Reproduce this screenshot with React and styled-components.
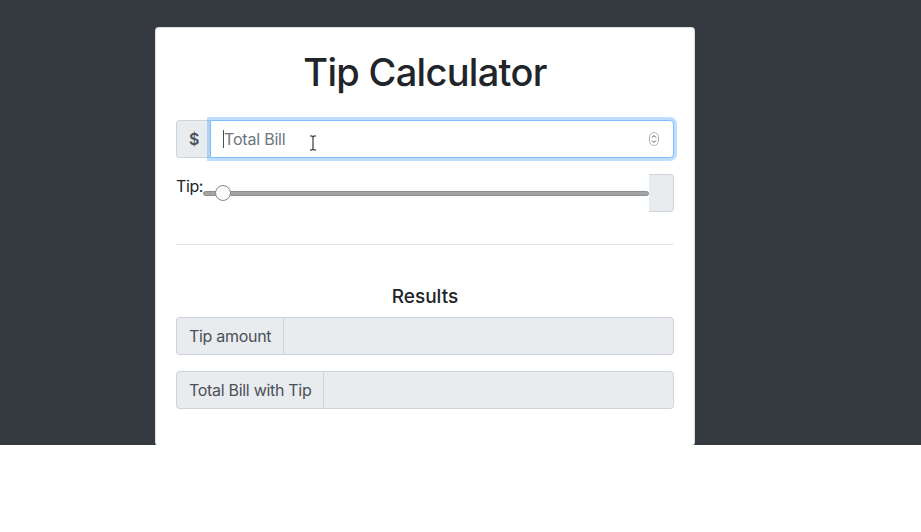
import styled, { createGlobalStyle } from "styled-components";

const GlobalStyle = createGlobalStyle`
    body {
        margin: 0;
        background: #fff;
        font-family: Inter, "Liberation Sans", sans-serif;
        color: #212529;
    }
`;

const Stage = styled.section`
    height: 445px;
    background-color: #343a40;
    padding: 27px 0 0 155px;
    box-sizing: border-box;
`;

const Card = styled.div`
    width: 540px;
    box-sizing: border-box;
    background: #fff;
    border: 1px solid rgba(0, 0, 0, 0.125);
    border-radius: 4px;
    padding: 20px;
`;

const Title = styled.h1`
    margin: 0 0 24px;
    font-size: 38px;
    line-height: 48px;
    font-weight: 500;
    text-align: center;
    letter-spacing: -0.7px;
`;

const Subtitle = styled.h5`
    margin: 0 0 8px;
    font-size: 19px;
    line-height: 24px;
    font-weight: 500;
    text-align: center;
`;

const Group = styled.div`
    display: flex;
    height: 38px;
    margin-bottom: ${(p) => p.$mb || 0}px;
    position: relative;
`;

const Addon = styled.span`
    display: flex;
    align-items: center;
    padding: 0 12px;
    background: #e9ecef;
    border: 1px solid #ced4da;
    border-radius: ${(p) => (p.$right ? "0 4px 4px 0" : "4px 0 0 4px")};
    ${(p) => (p.$right ? "border-left: 0;" : "border-right: 0;")}
    color: #495057;
    font-size: 16px;
    letter-spacing: -0.3px;
    font-weight: ${(p) => (p.$bold ? 600 : 400)};
    width: ${(p) => (p.$w ? `${p.$w}px` : "auto")};
    box-sizing: border-box;
`;

const Field = styled.div`
    flex: 1;
    display: flex;
    align-items: center;
    padding: 0 12px;
    border: 1px solid ${(p) => (p.$focus ? "#80bdff" : "#ced4da")};
    border-radius: 0 4px 4px 0;
    background: ${(p) => (p.$disabled ? "#e9ecef" : "#fff")};
    box-shadow: ${(p) => (p.$focus ? "0 0 0 3px rgba(0, 123, 255, 0.25)" : "none")};
    font-size: 16px;
    position: relative;
    z-index: ${(p) => (p.$focus ? 2 : 0)};
`;

const Placeholder = styled.span`
    color: #6c757d;
    flex: 1;
    display: flex;
    align-items: center;
    letter-spacing: -0.2px;

    &::before {
        content: "";
        width: 1px;
        height: 18px;
        background: #495057;
    }
`;

const Spinner = styled.svg`
    width: 10px;
    height: 14px;
    margin-right: 2px;
`;

const Cursor = styled.svg`
    position: absolute;
    left: 98px;
    top: 14px;
    width: 8px;
    height: 16px;
`;

const TipRow = styled.div`
    display: flex;
    height: 38px;
    margin-top: 16px;
`;

const TipLabel = styled.label`
    font-size: 16px;
    line-height: 24px;
    letter-spacing: -0.4px;
`;

const Range = styled.input`
    flex: 1;
    margin: 12px 0 0;
    height: 14px;
    appearance: none;
    -webkit-appearance: none;
    background: transparent;

    &::-webkit-slider-runnable-track {
        height: 5px;
        background: #a4a4a4;
        border: 1px solid #8e8e8e;
        border-radius: 3px;
        box-sizing: border-box;
    }

    &::-webkit-slider-thumb {
        -webkit-appearance: none;
        width: 16px;
        height: 16px;
        margin-top: -6.5px;
        border-radius: 50%;
        background: #fbfbfb;
        border: 1px solid #8a8a8a;
        box-sizing: border-box;
    }
`;

const Divider = styled.hr`
    margin: 32px 0 40px;
    border: 0;
    border-top: 1px solid rgba(0, 0, 0, 0.1);
`;

function App() {
    return (
        <>
            <GlobalStyle />
            <Stage>
                <Card>
                    <Title>Tip Calculator</Title>
                    <Group>
                        <Addon $bold $w={34}>$</Addon>
                        <Field $focus>
                            <Placeholder>Total Bill</Placeholder>
                            <Spinner viewBox="0 0 10 14">
                                <rect x="0.5" y="0.5" width="9" height="13" rx="4.5" fill="#fff" stroke="#b5b5b5" />
                                <path d="M3 5.5 L5 3.5 L7 5.5 M3 8.5 L5 10.5 L7 8.5" fill="none" stroke="#555" strokeWidth="1" />
                            </Spinner>
                            <Cursor viewBox="0 0 8 16">
                                <path d="M1 1 H3 Q4 1 4 2 Q4 1 5 1 H7 M4 2 V14 M1 15 H3 Q4 15 4 14 Q4 15 5 15 H7" fill="none" stroke="#111" strokeWidth="1" />
                            </Cursor>
                        </Field>
                    </Group>
                    <TipRow>
                        <TipLabel>Tip:</TipLabel>
                        <Range type="range" min="0" max="100" step="0.5" defaultValue="2.5" />
                        <Addon $right $w={25} />
                    </TipRow>
                    <Divider />
                    <Subtitle>Results</Subtitle>
                    <Group $mb={16}>
                        <Addon>Tip amount</Addon>
                        <Field $disabled />
                    </Group>
                    <Group $mb={16}>
                        <Addon>Total Bill with Tip</Addon>
                        <Field $disabled />
                    </Group>
                </Card>
            </Stage>
        </>
    );
}

export default App;
